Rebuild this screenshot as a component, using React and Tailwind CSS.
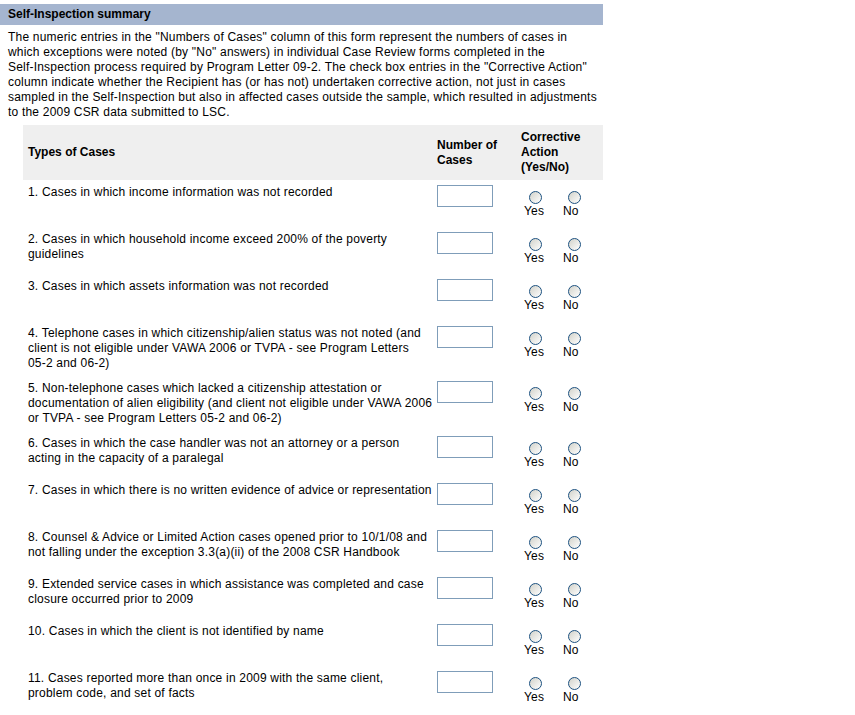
const intro = [
  'The numeric entries in the "Numbers of Cases" column of this form represent the numbers of cases in',
  'which exceptions were noted (by "No" answers) in individual Case Review forms completed in the',
  'Self-Inspection process required by Program Letter 09-2. The check box entries in the "Corrective Action"',
  "column indicate whether the Recipient has (or has not) undertaken corrective action, not just in cases",
  "sampled in the Self-Inspection but also in affected cases outside the sample, which resulted in adjustments",
  "to the 2009 CSR data submitted to LSC.",
];

const cases = [
  ["1. Cases in which income information was not recorded"],
  ["2. Cases in which household income exceed 200% of the poverty", "guidelines"],
  ["3. Cases in which assets information was not recorded"],
  [
    "4. Telephone cases in which citizenship/alien status was not noted (and",
    "client is not eligible under VAWA 2006 or TVPA - see Program Letters",
    "05-2 and 06-2)",
  ],
  [
    "5. Non-telephone cases which lacked a citizenship attestation or",
    "documentation of alien eligibility (and client not eligible under VAWA 2006",
    "or TVPA - see Program Letters 05-2 and 06-2)",
  ],
  ["6. Cases in which the case handler was not an attorney or a person", "acting in the capacity of a paralegal"],
  ["7. Cases in which there is no written evidence of advice or representation"],
  [
    "8. Counsel & Advice or Limited Action cases opened prior to 10/1/08 and",
    "not falling under the exception 3.3(a)(ii) of the 2008 CSR Handbook",
  ],
  ["9. Extended service cases in which assistance was completed and case", "closure occurred prior to 2009"],
  ["10. Cases in which the client is not identified by name"],
  ["11. Cases reported more than once in 2009 with the same client,", "problem code, and set of facts"],
];

function Radio({ label }) {
  return (
    <div className="w-[39px] flex flex-col items-start">
      <span className="mt-[6px] ml-[5px] w-[13px] h-[13px] rounded-full border border-[#1c5180] bg-linear-to-br from-[#d2d2ca] to-white" />
      <span>{label}</span>
    </div>
  );
}

export default function App() {
  return (
    <div className="w-[603px] pt-[4px] font-['Liberation_Sans',Arial,sans-serif] text-[12px] leading-[15px] text-black">
      <div className="h-[21px] bg-[#a5b5cf] pl-[8px] flex items-center font-bold">
        Self-Inspection summary
      </div>

      <div className="pl-[8px] mt-[5px] tracking-[0.2px]">
        {intro.map((line, i) => (
          <div key={i} className="whitespace-nowrap">{line}</div>
        ))}
      </div>

      <div className="ml-[23px] mt-[5px]">
        <div className="grid grid-cols-[409px_84px_87px] bg-[#efefef] py-[5px] items-center font-bold">
          <div className="pl-[5px]">Types of Cases</div>
          <div className="pl-[5px]">Number of Cases</div>
          <div className="pl-[5px]">Corrective Action (Yes/No)</div>
        </div>

        {cases.map((lines, i) => (
          <div key={i} className="grid grid-cols-[409px_84px_87px] py-[5px] items-start tracking-[0.2px]">
            <div className="pl-[5px]">
              {lines.map((line, j) => (
                <div key={j} className="whitespace-nowrap">{line}</div>
              ))}
            </div>
            <div className="pl-[5px]">
              <input
                type="text"
                className="block w-[56px] h-[22px] border border-[#7f9db9] bg-white px-1 outline-none"
              />
            </div>
            <div className="pl-[8px] pb-[3px] flex">
              <Radio label="Yes" />
              <Radio label="No" />
            </div>
          </div>
        ))}
      </div>
    </div>
  );
}
